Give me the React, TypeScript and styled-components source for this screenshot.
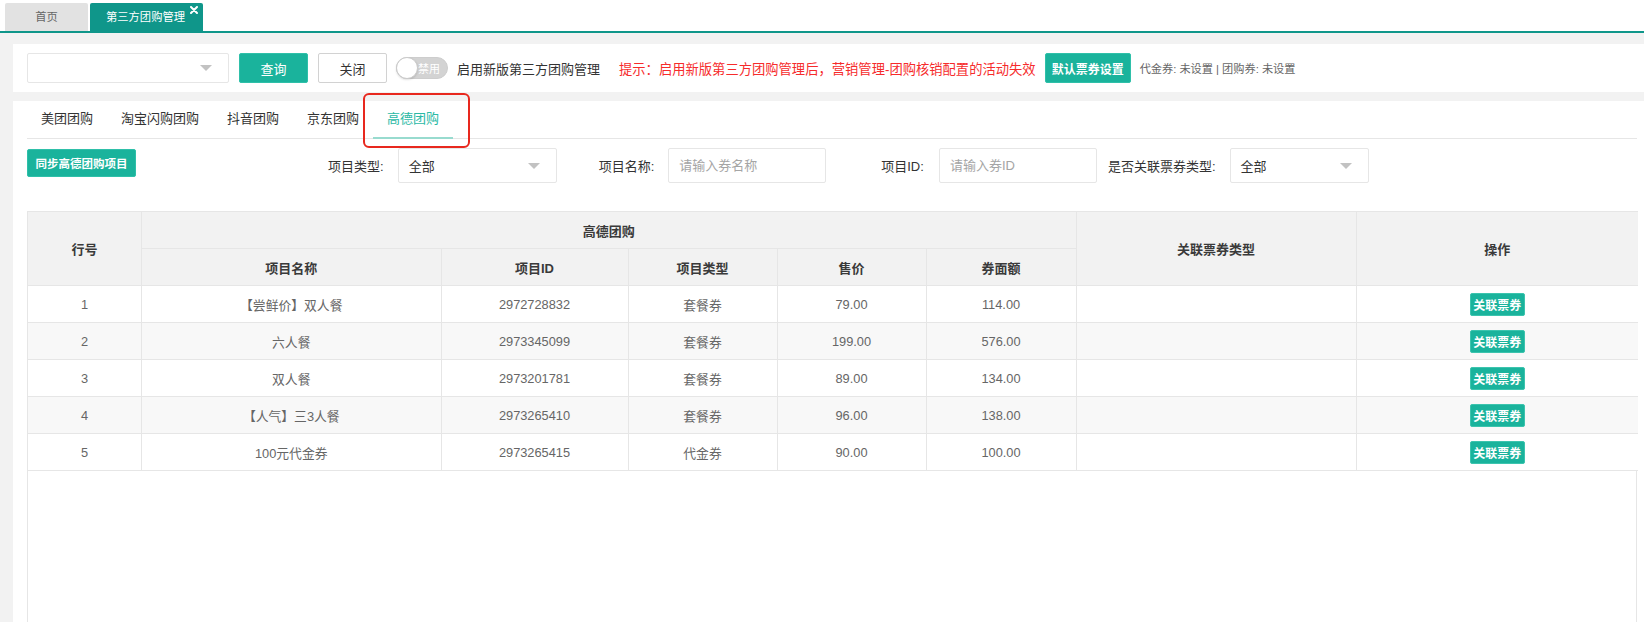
import React from "react";
import styled, { createGlobalStyle } from "styled-components";

const TEAL = "#1ab39c";
const TAB_TEAL = "#0f968a";
const LINE = "#e6e6e6";

const GlobalStyle = createGlobalStyle`
  html, body { margin: 0; padding: 0; height: 100%; overflow: hidden; }
  body {
    background: #f2f2f2;
    font-family: "Liberation Sans", "Noto Sans CJK SC", sans-serif;
    font-size: 13px;
    color: #333;
  }
  #root { height: 100%; }
  * { box-sizing: border-box; }
`;

const Shell = styled.div`
  display: flex;
  flex-direction: column;
  height: 100vh;
`;

/* ---------- page tabs ---------- */
const TabStrip = styled.div`
  display: flex;
  align-items: flex-end;
  gap: 2px;
  height: 33px;
  padding-left: 5px;
  background: #fff;
  border-bottom: 2px solid ${TAB_TEAL};
`;

const PageTab = styled.div<{ $active?: boolean; $width: number }>`
  position: relative;
  width: ${(p) => p.$width}px;
  height: 28px;
  line-height: 28px;
  font-size: 11.3px;
  padding: ${(p) => (p.$active ? "0 13px 0 11px" : "0")};
  text-align: center;
  background: ${(p) => (p.$active ? TAB_TEAL : "#e2e2e2")};
  color: ${(p) => (p.$active ? "#fff" : "#666")};
  border-radius: 2px 2px 0 0;
`;

const TabClose = styled.span`
  position: absolute;
  top: 3px;
  right: 5px;
  width: 8px;
  height: 8px;
  display: flex;
`;

/* ---------- content ---------- */
const Content = styled.div`
  flex: 1;
  min-height: 0;
  display: flex;
  flex-direction: column;
  gap: 9px;
  padding: 11px 0 0 13px;
`;

const Toolbar = styled.div`
  height: 48px;
  flex: none;
  background: #fff;
  display: flex;
  align-items: center;
  padding-left: 14px;
`;

const SelectBox = styled.div<{ $width: number; $height: number }>`
  position: relative;
  width: ${(p) => p.$width}px;
  height: ${(p) => p.$height}px;
  border: 1px solid ${LINE};
  border-radius: 2px;
  background: #fff;
  display: flex;
  align-items: center;
  padding-left: 10px;
  font-size: 13px;
  color: #333;
`;

const Caret = styled.span`
  position: absolute;
  right: 16px;
  top: 50%;
  margin-top: -3px;
  width: 0;
  height: 0;
  border-left: 6px solid transparent;
  border-right: 6px solid transparent;
  border-top: 6px solid #c2c2c2;
`;

const Button = styled.button<{ $variant?: "primary" | "plain"; $width: number; $height?: number; $size?: number; $bold?: boolean }>`
  width: ${(p) => p.$width}px;
  height: ${(p) => p.$height ?? 30}px;
  padding: 0;
  font-family: inherit;
  font-size: ${(p) => p.$size ?? 13}px;
  font-weight: ${(p) => (p.$bold ? 700 : 400)};
  border-radius: 2px;
  cursor: pointer;
  flex: none;
  white-space: nowrap;
  background: ${(p) => (p.$variant === "plain" ? "#fff" : TEAL)};
  color: ${(p) => (p.$variant === "plain" ? "#333" : "#fff")};
  border: 1px solid ${(p) => (p.$variant === "plain" ? "#d2d2d2" : "#2fc0a9")};
`;

const Spaced = styled.div<{ $left: number }>`
  margin-left: ${(p) => p.$left}px;
  display: flex;
  align-items: center;
  flex: none;
`;

const Switch = styled.div`
  position: relative;
  width: 52px;
  height: 22px;
  border-radius: 11px;
  background: #d3d3d3;
  border: 1px solid #cdcdcd;
  display: flex;
  align-items: center;
  justify-content: flex-end;
  padding-right: 7px;
  font-size: 11px;
  color: #fff;
`;

const Knob = styled.span`
  position: absolute;
  left: -1px;
  top: -1px;
  width: 22px;
  height: 22px;
  border-radius: 50%;
  background: #fff;
  border: 1px solid #cacaca;
  box-shadow: 0 1px 2px rgba(0, 0, 0, 0.12);
`;

const Label = styled.span`
  font-size: 13px;
  color: #333;
  white-space: nowrap;
`;

const Warning = styled.span`
  font-size: 13.3px;
  color: #f62b2b;
  white-space: nowrap;
`;

const Muted = styled.span`
  font-size: 11.2px;
  color: #666;
  white-space: nowrap;
`;

/* ---------- main panel ---------- */
const Panel = styled.div`
  flex: 1;
  min-height: 0;
  background: #fff;
  display: flex;
  flex-direction: column;
  padding: 0 7px 0 14px;
`;

const SubTabs = styled.div`
  display: flex;
  height: 38px;
  flex: none;
  border-bottom: 1px solid ${LINE};
`;

const SubTab = styled.div<{ $active?: boolean }>`
  position: relative;
  height: 38px;
  margin-bottom: -1px;
  padding: 0 14px;
  line-height: 36px;
  font-size: 13px;
  color: ${(p) => (p.$active ? "#2bb9a5" : "#333")};
  border-bottom: 2px solid ${(p) => (p.$active ? "#98dbcf" : "transparent")};
  white-space: nowrap;
`;

const Highlight = styled.span`
  position: absolute;
  left: -10px;
  right: -17px;
  top: -8px;
  bottom: -11px;
  border: 2px solid #e8281e;
  border-radius: 6px;
  pointer-events: none;
`;

const FilterRow = styled.div`
  display: flex;
  align-items: flex-start;
  margin-top: 9px;
  flex: none;
`;

const SyncButton = styled(Button)`
  margin-top: 1px;
`;

const Field = styled.div<{ $left: number; $gap: number }>`
  display: flex;
  align-items: center;
  height: 35px;
  margin-left: ${(p) => p.$left}px;
  gap: ${(p) => p.$gap}px;
`;

const TextInput = styled.input<{ $width: number }>`
  width: ${(p) => p.$width}px;
  height: 35px;
  border: 1px solid ${LINE};
  border-radius: 2px;
  padding: 0 10px;
  font-family: inherit;
  font-size: 13px;
  color: #333;
  outline: none;
  &::placeholder { color: #a5a5a5; }
`;

const TableArea = styled.div`
  flex: 1;
  min-height: 0;
  margin-top: 28px;
  border-left: 1px solid ${LINE};
  border-right: 1px solid ${LINE};
`;

const Grid = styled.table`
  width: 100%;
  border-collapse: collapse;
  table-layout: fixed;
  font-size: 12.8px;
`;

const Th = styled.th`
  height: 37px;
  padding: 0;
  background: #f2f2f2;
  border: 1px solid ${LINE};
  font-size: 13px;
  font-weight: 700;
  color: #3a3a3a;
  text-align: center;
  &:first-child { border-left: none; }
  &:last-child { border-right: none; }
`;

const Tr = styled.tr<{ $shade?: boolean }>`
  height: 37px;
  background: ${(p) => (p.$shade ? "#f8f8f8" : "#fff")};
`;

const Td = styled.td`
  padding: 0;
  border: 1px solid ${LINE};
  color: #666;
  text-align: center;
  &:first-child { border-left: none; }
  &:last-child { border-right: none; }
`;

const LinkButton = styled.button`
  width: 55px;
  height: 23px;
  padding: 0;
  border: 1px solid #3cc4ae;
  border-radius: 2px;
  background: ${TEAL};
  color: #fff;
  font-family: inherit;
  font-size: 12px;
  font-weight: 700;
  cursor: pointer;
`;

const columns = [113.5, 299.5, 187, 149, 149, 150, 280, 282];

const rows = [
  { no: 1, name: "【尝鲜价】双人餐", id: "2972728832", type: "套餐券", price: "79.00", face: "114.00" },
  { no: 2, name: "六人餐", id: "2973345099", type: "套餐券", price: "199.00", face: "576.00" },
  { no: 3, name: "双人餐", id: "2973201781", type: "套餐券", price: "89.00", face: "134.00" },
  { no: 4, name: "【人气】三3人餐", id: "2973265410", type: "套餐券", price: "96.00", face: "138.00" },
  { no: 5, name: "100元代金券", id: "2973265415", type: "代金券", price: "90.00", face: "100.00" },
];

const platforms = ["美团团购", "淘宝闪购团购", "抖音团购", "京东团购", "高德团购"];

export default function App() {
  return (
    <Shell>
      <GlobalStyle />
      <TabStrip>
        <PageTab $width={83}>首页</PageTab>
        <PageTab $width={113} $active>
          第三方团购管理
          <TabClose>
            <svg width="8" height="8" viewBox="0 0 8 8">
              <path d="M1 1L7 7M7 1L1 7" stroke="#fff" strokeWidth="2" strokeLinecap="round" />
            </svg>
          </TabClose>
        </PageTab>
      </TabStrip>

      <Content>
        <Toolbar>
          <SelectBox $width={202} $height={30}>
            <Caret />
          </SelectBox>
          <Spaced $left={10}>
            <Button $width={69}>查询</Button>
          </Spaced>
          <Spaced $left={10}>
            <Button $width={69} $variant="plain">关闭</Button>
          </Spaced>
          <Spaced $left={9}>
            <Switch>
              <Knob />
              禁用
            </Switch>
          </Spaced>
          <Spaced $left={9}>
            <Label>启用新版第三方团购管理</Label>
          </Spaced>
          <Spaced $left={19}>
            <Warning>提示：启用新版第三方团购管理后，营销管理-团购核销配置的活动失效</Warning>
          </Spaced>
          <Spaced $left={9}>
            <Button $width={86} $size={12} $bold>默认票券设置</Button>
          </Spaced>
          <Spaced $left={9}>
            <Muted>代金券: 未设置 | 团购券: 未设置</Muted>
          </Spaced>
        </Toolbar>

        <Panel>
          <SubTabs>
            {platforms.map((name, i) => (
              <SubTab key={name} $active={i === platforms.length - 1}>
                {name}
                {i === platforms.length - 1 && <Highlight />}
              </SubTab>
            ))}
          </SubTabs>

          <FilterRow>
            <SyncButton $width={109} $height={28} $size={11.5} $bold>同步高德团购项目</SyncButton>
            <Field $left={192} $gap={14}>
              <Label>项目类型:</Label>
              <SelectBox $width={159} $height={35}>
                全部
                <Caret />
              </SelectBox>
            </Field>
            <Field $left={42} $gap={14}>
              <Label>项目名称:</Label>
              <TextInput $width={158} placeholder="请输入券名称" />
            </Field>
            <Field $left={55} $gap={15}>
              <Label>项目ID:</Label>
              <TextInput $width={158} placeholder="请输入券ID" />
            </Field>
            <Field $left={11} $gap={14}>
              <Label>是否关联票券类型:</Label>
              <SelectBox $width={139} $height={35}>
                全部
                <Caret />
              </SelectBox>
            </Field>
          </FilterRow>

          <TableArea>
            <Grid>
              <colgroup>
                {columns.map((w, i) => (
                  <col key={i} style={{ width: w }} />
                ))}
              </colgroup>
              <thead>
                <tr>
                  <Th rowSpan={2}>行号</Th>
                  <Th colSpan={5}>高德团购</Th>
                  <Th rowSpan={2}>关联票券类型</Th>
                  <Th rowSpan={2}>操作</Th>
                </tr>
                <tr>
                  <Th>项目名称</Th>
                  <Th>项目ID</Th>
                  <Th>项目类型</Th>
                  <Th>售价</Th>
                  <Th>券面额</Th>
                </tr>
              </thead>
              <tbody>
                {rows.map((r, i) => (
                  <Tr key={r.no} $shade={i % 2 === 1}>
                    <Td>{r.no}</Td>
                    <Td>{r.name}</Td>
                    <Td>{r.id}</Td>
                    <Td>{r.type}</Td>
                    <Td>{r.price}</Td>
                    <Td>{r.face}</Td>
                    <Td />
                    <Td>
                      <LinkButton>关联票券</LinkButton>
                    </Td>
                  </Tr>
                ))}
              </tbody>
            </Grid>
          </TableArea>
        </Panel>
      </Content>
    </Shell>
  );
}
